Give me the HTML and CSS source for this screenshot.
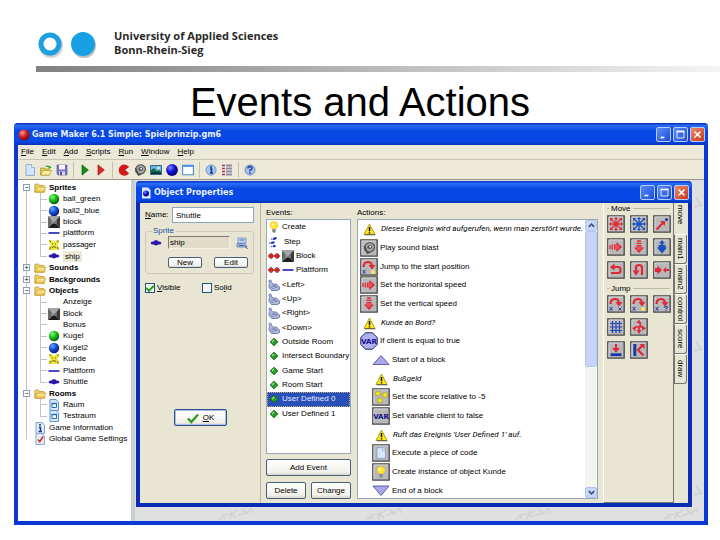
FILE: index.html
```html
<!DOCTYPE html>
<html lang="en">
<head>
<meta charset="utf-8">
<title>Events and Actions</title>
<link rel="stylesheet" href="styles.css">
</head>
<body>
<svg class="defs" aria-hidden="true">
  <defs>
    <radialGradient id="gGreen" cx=".35" cy=".3" r=".8"><stop offset="0" stop-color="#7dff6a"/><stop offset=".5" stop-color="#17b417"/><stop offset="1" stop-color="#064a06"/></radialGradient>
    <radialGradient id="gBlue" cx=".35" cy=".3" r=".8"><stop offset="0" stop-color="#6aa8ff"/><stop offset=".5" stop-color="#1646d0"/><stop offset="1" stop-color="#06114a"/></radialGradient>
    <radialGradient id="gDeep" cx=".35" cy=".3" r=".8"><stop offset="0" stop-color="#7a8cff"/><stop offset=".45" stop-color="#1414d8"/><stop offset="1" stop-color="#00005a"/></radialGradient>
    <radialGradient id="gRed" cx=".35" cy=".3" r=".8"><stop offset="0" stop-color="#ff9a8a"/><stop offset=".5" stop-color="#d01c1c"/><stop offset="1" stop-color="#5a0606"/></radialGradient>
    <linearGradient id="gFolder" x2="0" y2="1"><stop offset="0" stop-color="#fff6b0"/><stop offset="1" stop-color="#e8b93a"/></linearGradient>
  </defs>
  <symbol id="green" viewBox="0 0 12 12"><circle cx="6" cy="6" r="5.2" fill="url(#gGreen)"/></symbol>
  <symbol id="blue" viewBox="0 0 12 12"><circle cx="6" cy="6" r="5.2" fill="url(#gBlue)"/></symbol>
  <symbol id="deep" viewBox="0 0 12 12"><circle cx="6" cy="6" r="5.9" fill="url(#gDeep)"/></symbol>
  <symbol id="block" viewBox="0 0 12 12"><path d="M0 0H12L6 6Z" fill="#a4a4a4"/><path d="M0 0V12L6 6Z" fill="#6a6a6a"/><path d="M12 0V12L6 6Z" fill="#3a3a3a"/><path d="M0 12H12L6 6Z" fill="#1c1c1c"/><path d="M3 3H9V8H3Z" fill="#b0b0b0" opacity=".45"/></symbol>
  <symbol id="plat" viewBox="0 0 12 12"><path d="M.5 6H11.5" stroke="#1c1cb0" stroke-width="1.6"/></symbol>
  <symbol id="ship" viewBox="0 0 12 12"><path d="M.5 6Q1 4.3 3.5 4.5L5 3.2H7L8.500 4.500Q11 4.300 11.500 6Q11 7.800 8.500 7.600L6 8.600L3.500 7.600Q1 7.800 .5 6Z" fill="#2a16a8"/></symbol>
  <symbol id="pass" viewBox="0 0 12 12"><path d="M1 1H4L5 3H7L8 1H11V4L9 6L11 8V11H1V8L3 6L1 4Z" fill="#ece438"/><path d="M1.500 1.500L3 3M10.500 1.500L9 3M1.500 10.500L3 8M10.500 10.500L9 8M4 5H5M7 5H8M4 8.500Q6 6.500 8 8.500" stroke="#6a6410" stroke-width="1" fill="none"/></symbol>
  <symbol id="folder" viewBox="0 0 12 12"><path d="M.8 10V3Q.8 2 1.800 2H4.500L5.500 3.500H9.500Q10.300 3.500 10.300 4.500V10Z" fill="#f2d268" stroke="#b89028" stroke-width=".7"/><path d="M1 10.300L2.800 5.200H11.600L10.300 10.300Z" fill="url(#gFolder)" stroke="#c09a30" stroke-width=".7"/></symbol>
  <symbol id="room" viewBox="0 0 12 12"><path d="M2 .6H8L10.500 3V11.400H2Z" fill="#dcecff" stroke="#5b8ccc"/><path d="M4 4.500H8.500V8.500H4Z" fill="#fff" stroke="#2468b8"/><path d="M3.500 4.500H9" stroke="#2468b8" stroke-width="1.500"/></symbol>
  <symbol id="info" viewBox="0 0 12 12"><path d="M2 .6H8L10.500 3V11.400H2Z" fill="#e4eefc" stroke="#7c9cc8"/><path d="M6 2V4M4.800 5.500H6.500V9.500M4.500 9.500H8" stroke="#123a8c" stroke-width="1.500" fill="none"/></symbol>
  <symbol id="settings" viewBox="0 0 12 12"><path d="M2 .6H8L10.500 3V11.400H2Z" fill="#e8eefa" stroke="#8ca0c8"/><path d="M4 6.500L5.800 8.700L9 3.500" stroke="#d02828" stroke-width="1.500" fill="none"/></symbol>
  <symbol id="doc" viewBox="0 0 12 12"><path d="M2 .6H7.500L10.500 3.500V11.400H2Z" fill="#d6e6fb" stroke="#7d9ccc" stroke-width=".8"/><path d="M7.500 .6V3.500H10.500" fill="#fff" stroke="#7d9ccc" stroke-width=".7"/></symbol>
  <symbol id="open" viewBox="0 0 12 12"><path d="M.6 11V4H4L5 5H9V11Z" fill="#e8cc58" stroke="#a88820" stroke-width=".7"/><path d="M.8 11L3 6.500H11.500L9.500 11Z" fill="#fff0a0" stroke="#b89028" stroke-width=".7"/><path d="M5 3Q7 .5 9.500 2.500V1.200L11.500 4L8.200 4.800L9 3.800Q7 2 5 3Z" fill="#28a028"/></symbol>
  <symbol id="save" viewBox="0 0 12 12"><path d="M1 1H11V11H2L1 10Z" fill="#7a72c4" stroke="#5048a0" stroke-width=".6"/><path d="M3 1H9V5.500H3Z" fill="#f2f2fc"/><path d="M3 7.500H9V11H3Z" fill="#d8d8ee"/><path d="M4 8H6V11H4Z" fill="#5048a0"/></symbol>
  <symbol id="run" viewBox="0 0 12 12"><path d="M3 .8V11.200L9.300 6Z" fill="#189018" stroke="#0a5c0a" stroke-width=".7"/></symbol>
  <symbol id="debug" viewBox="0 0 12 12"><path d="M3 .8V11.200L9.300 6Z" fill="#e02828" stroke="#a01414" stroke-width=".7"/></symbol>
  <symbol id="pac" viewBox="0 0 12 12"><path d="M10.800 2.800A5.600 5.600 0 1 0 10.800 9.500L6.500 6Z" fill="#d81818"/><path d="M10.800 2.800L6.500 6L10.800 9.500" stroke="#701010" stroke-width=".7" fill="none"/></symbol>
  <symbol id="speaker" viewBox="0 0 12 12"><ellipse cx="6.500" cy="5.500" rx="5" ry="4.500" transform="rotate(-35 6.500 5.500)" fill="#aaa" stroke="#555" stroke-width="1.300"/><ellipse cx="6.700" cy="5" rx="2.500" ry="2" fill="#555"/><circle cx="7.200" cy="4.700" r="1" fill="#e8e8e8"/><path d="M1.500 4L4.500 11L7 10" stroke="#4a4a4a" stroke-width="1.500" fill="none"/></symbol>
  <symbol id="image" viewBox="0 0 12 12"><path d="M.5 1.500H11.500V10.500H.5Z" fill="#68b8f0" stroke="#1a4a78" stroke-width=".8"/><path d="M1 6L4 4L7 7L9 6L11 7.500V10H1Z" fill="#0f6a48"/><path d="M1 9L6 8L11 9V10H1Z" fill="#0a3034"/><circle cx="8.500" cy="4" r="1.200" fill="#fff8c0"/></symbol>
  <symbol id="window" viewBox="0 0 12 12"><path d="M.6 1.200H11.400V10.800H.6Z" fill="#fbfdff" stroke="#4a8cc8" stroke-width="1.100"/><path d="M1 2H11" stroke="#4a94e0" stroke-width="1.800"/></symbol>
  <symbol id="tinfo" viewBox="0 0 12 12"><circle cx="6" cy="6" r="5" fill="#a8c8f0" stroke="#6c94cc"/><path d="M6 2.200V4M5 5H6.500V9M5 9H8" stroke="#1038a0" stroke-width="1.700" fill="none"/></symbol>
  <symbol id="thelp" viewBox="0 0 12 12"><circle cx="6" cy="6" r="5" fill="#a8c4ec" stroke="#6c8cc8"/><path d="M3.800 4.500Q4 2.500 6 2.500Q8.200 2.600 8 4.400Q7.700 5.300 6 6.300V7.300M6 8.300V9.800" stroke="#1c3c9c" stroke-width="1.500" fill="none"/></symbol>
  <symbol id="list" viewBox="0 0 12 12"><path d="M1 1.500H4M1 4.500H4M1 7.500H4M1 10.500H4" stroke="#a03858" stroke-width="1.500"/><path d="M5 1.500H11M5 4.500H11M5 7.500H11M5 10.500H11" stroke="#8c8ca8" stroke-width="1.800"/></symbol>
  <symbol id="bulb" viewBox="0 0 12 12"><path d="M6 .5Q10 .5 10 4.300Q10 6 7.800 8H4.200Q2 6 2 4.300Q2 .5 6 .5Z" fill="#ffe62c" stroke="#e0b820" stroke-width=".5"/><path d="M4.300 8H7.700V11L6 12L4.300 11Z" fill="#8a8a98"/><circle cx="4.800" cy="3.500" r="1.200" fill="#fffbd0"/></symbol>
  <symbol id="step" viewBox="0 0 12 12"><path d="M5 2Q8 0 9 2Q8 4.500 5 4ZM3 6Q6 4.500 7 6.500Q5.500 8.500 3 7.800ZM5 9.500Q7 8 8 10Q7 12 5 11Z" fill="#2a3cc8"/><path d="M3.500 3.500L4.300 2.500M1.500 7.500L2.300 6.500M3.500 11L4.200 10" stroke="#2a3cc8" stroke-width="1.300"/></symbol>
  <symbol id="collide" viewBox="0 0 12 12"><path d="M0 6L2.500 3.200V5H3.500V3.200L6 6L3.500 8.800V7H2.500V8.800ZM6 6L8.500 3.200V5H9.500V3.200L12 6L9.500 8.800V7H8.500V8.800Z" fill="#e02020" stroke="#801010" stroke-width=".5"/></symbol>
  <symbol id="key" viewBox="0 0 12 12"><path d="M1 1.500Q3 0 3.500 2.500Q3.500 4.500 5 5H8.500L11.500 8V10.500L9 11.500H3.500L1 8.500V6Q2.500 4 1 3Z" fill="#b4bcdc" stroke="#5c68a0" stroke-width=".8"/><path d="M3.500 6.500L9 9M5 6L9.500 8M2.500 8L6 10" stroke="#5c68a0" stroke-width=".7"/></symbol>
  <symbol id="diamond" viewBox="0 0 12 12"><path d="M6 2.200L9.800 6L6 9.800L2.200 6Z" fill="#2c9c2c" stroke="#145c14" stroke-width=".9"/><path d="M4 6L6 4" stroke="#8ce87c" stroke-width="1.200"/></symbol>
  <symbol id="find" viewBox="0 0 12 12"><path d="M2 1H10V6H2Z" fill="#c8dcf8" stroke="#6c88c0" stroke-width=".8"/><path d="M1 6.500H9L11 10H1Z" fill="#a0b8e4" stroke="#6078b0" stroke-width=".8"/><path d="M3.500 3H8.500M3 8.500H8M9 9L11.500 12" stroke="#44609c"/></symbol>
  <symbol id="check" viewBox="0 0 12 12"><path d="M1 6.500L4.300 10L11 2.500" stroke="#2c9c1c" stroke-width="2.300" fill="none"/></symbol>
  <symbol id="warn" viewBox="0 0 18 18"><path d="M9.500 4L15 14.500H4Z" fill="#ffe818" stroke="#a89018" stroke-width=".9" stroke-linejoin="round"/><path d="M15.300 14.800H5" stroke="#444" stroke-width=".8"/><path d="M9.500 7V11.200M9.500 12.200V13.600" stroke="#111" stroke-width="1.500"/></symbol>
  <symbol id="up" viewBox="0 0 18 18"><path d="M9 4.500L17 13.500H1Z" fill="#aaa8ec" stroke="#44448c" stroke-width=".8"/></symbol>
  <symbol id="down" viewBox="0 0 18 18"><path d="M9 13.500L17 4H1Z" fill="#aaa8ec" stroke="#44448c" stroke-width=".8"/></symbol>
  <symbol id="oct" viewBox="0 0 18 18"><path d="M5.500 .8H12.500L17.200 5.500V12.500L12.500 17.200H5.500L.8 12.500V5.500Z" fill="#b0b0f4" stroke="#20205c"/></symbol>
  <symbol id="tile" viewBox="0 0 18 18"><path d="M.8 .8H17.200V17.200H.8Z" fill="#b8b8b8" stroke="#484848" stroke-width="1.300"/><path d="M1.900 16V1.900H16" stroke="#e0e0e0" stroke-width=".8" fill="none"/></symbol>
  <symbol id="star" viewBox="0 0 18 18"><path d="M9 3V15M3 9H15M4 4L14 14M14 4L4 14" stroke="currentColor" stroke-width="1.300"/><path d="M7 4L9 2L11 4ZM7 14L9 16L11 14ZM4 7L2 9L4 11ZM14 7L16 9L14 11ZM3 6V3H6ZM12 3H15V6ZM3 12V15H6ZM15 12V15H12Z" fill="currentColor"/></symbol>
  <symbol id="target" viewBox="0 0 18 18"><path d="M3.500 14.500L10 8" stroke="#e02838" stroke-width="2.200"/><path d="M7 6H12V11Z" fill="#e02838"/><circle cx="13.500" cy="4.500" r="1.500" fill="#1838a0"/></symbol>
  <symbol id="right" viewBox="0 0 18 18"><path d="M3 7V11M5.300 6.500V11.500" stroke="#e02838" stroke-width="1.300"/><path d="M7 6.500H9.500V4L15 9L9.500 14V11.500H7Z" fill="#e02838"/><path d="M8 8H12M8 10H12" stroke="#f0a0a0" stroke-width=".7"/></symbol>
  <symbol id="arrdown" viewBox="0 0 18 18"><path d="M7 3H11M6.500 5.300H11.500" stroke="#e02838" stroke-width="1.300"/><path d="M6.500 7H11.500V9.500H14L9 15L4 9.500H6.500Z" fill="#e02838"/><path d="M8 8V12M10 8V12" stroke="#f0a0a0" stroke-width=".7"/></symbol>
  <symbol id="updown" viewBox="0 0 18 18"><path d="M9 2L12 5.500H10V7H12.500V9.500H14L9 15.500L4 9.500H5.500V7H8V5.500H6Z" fill="#1850c0"/></symbol>
  <symbol id="revh" viewBox="0 0 18 18"><path d="M6 6H11.500Q13.500 6 13.500 9Q13.500 12 11.500 12H4" stroke="#e02838" stroke-width="2.200" fill="none"/><path d="M3 6.300L7.500 2.500V9.500Z" fill="#e02838"/></symbol>
  <symbol id="revv" viewBox="0 0 18 18"><path d="M6 11V7Q6 4 9 4Q12 4 12 7V14" stroke="#e02838" stroke-width="2.200" fill="none"/><path d="M2.500 9.500H9.500L6 14.500Z" fill="#e02838"/></symbol>
  <symbol id="friction" viewBox="0 0 18 18"><path d="M2 7H4.500V4.500L9 9L4.500 13.500V11H2ZM10 9L13 6V8H16V10H13V12Z" fill="#e02838"/></symbol>
  <symbol id="hop" viewBox="0 0 18 18"><path d="M3.500 9Q3.500 4 8 4Q11.500 4 12 8" stroke="#e02838" stroke-width="2.200" fill="none"/><path d="M8.500 7H15.500L12 11.500Z" fill="#e02838"/><path d="M2.500 12L5.500 15.500M5.500 12L2.500 15.500" stroke="#3048a8" stroke-width="1.100"/></symbol>
  <symbol id="grid" viewBox="0 0 18 18"><path d="M3 5.500H15M3 9H15M3 12.500H15M5.500 3V15M9 3V15M12.500 3V15" stroke="#2848b8" stroke-width="1.200"/></symbol>
  <symbol id="wrap" viewBox="0 0 18 18"><path d="M9 4Q12 6 9 9V14M4 11Q5 8 9 9Q12 8 13 10" stroke="#e02838" stroke-width="1.600" fill="none"/><path d="M6.500 5L9 1.500L11 5.500ZM12 7.500L16 10.500L12 12.500ZM6 8.500L2 10L5 13ZM6.500 12H11.500L9 16Z" fill="#e02838"/></symbol>
  <symbol id="contact" viewBox="0 0 18 18"><path d="M8 3H10V7H13L9 11.500L5 7H8Z" fill="#e02838"/><path d="M3.500 13.700H14.500" stroke="#1838a8" stroke-width="2.800"/></symbol>
  <symbol id="bounce" viewBox="0 0 18 18"><path d="M4.800 3V15" stroke="#1838a8" stroke-width="3"/><path d="M13.500 14.500L8 9L12 5" stroke="#e02838" stroke-width="2.200" fill="none"/><path d="M9.500 3H14.500V8Z" fill="#e02838"/></symbol>
  <symbol id="score" viewBox="0 0 18 18"><g fill="#f4e820" stroke="#98901c" stroke-width=".6"><circle cx="6" cy="5.500" r="2.400"/><circle cx="13" cy="7" r="2.400"/><circle cx="8" cy="12.500" r="2.400"/></g></symbol>
  <symbol id="mark" viewBox="0 0 44 16"><path d="M1 15L7 10M8 14L6 9L13 8M14 14L16 4M15 9L24 3M16 9L21 12M23 10L32 6L27 3M31 9L38 2L41 7" stroke="#d3d3d3" stroke-width="2" fill="none"/></symbol>
  <symbol id="edge" viewBox="0 0 10 12"><path d="M1 11L8 9L3 2" stroke="#d3d3d3" stroke-width="2" fill="none"/></symbol>
</svg>

<header class="brand">
  <svg class="logo" viewBox="0 0 64 30" aria-hidden="true">
    <g opacity=".25"><circle cx="15" cy="16" r="9" fill="none" stroke="#555" stroke-width="6"/><circle cx="48" cy="16" r="12"/></g>
    <circle cx="14" cy="14" r="9" fill="#fff" stroke="#1f9fe0" stroke-width="5"/><circle cx="47" cy="14" r="12" fill="#18a0e4"/>
  </svg>
  <p>University of Applied Sciences<br>Bonn-Rhein-Sieg</p>
</header>
<div class="rule"></div>
<h1>Events and Actions</h1>

<main class="app">
  <div class="titlebar">
    <svg class="i12" viewBox="0 0 12 12" aria-hidden="true"><circle cx="6" cy="6" r="5.500" fill="url(#gRed)"/></svg>
    <h2>Game Maker 6.1 Simple: Spielprinzip.gm6</h2>
    <div class="winbtns">
      <button aria-label="Minimize"><svg viewBox="0 0 15 15"><path d="M4 11H8.500" stroke="#fff" stroke-width="2"/></svg></button>
      <button aria-label="Maximize"><svg viewBox="0 0 15 15"><path d="M3.500 4H11.500V11.500H3.500Z" fill="none" stroke="#fff"/><path d="M3 4H12" stroke="#fff" stroke-width="2"/></svg></button>
      <button class="close" aria-label="Close"><svg viewBox="0 0 15 15"><path d="M4 4L11 11M11 4L4 11" stroke="#fff" stroke-width="1.800"/></svg></button>
    </div>
  </div>
  <nav class="menu">
    <a href="#"><u>F</u>ile</a><a href="#"><u>E</u>dit</a><a href="#"><u>A</u>dd</a><a href="#"><u>S</u>cripts</a><a href="#"><u>R</u>un</a><a href="#"><u>W</u>indow</a><a href="#"><u>H</u>elp</a>
  </nav>
  <div class="toolbar">
    <button aria-label="New"><svg><use href="#doc"/></svg></button>
    <button aria-label="Open"><svg><use href="#open"/></svg></button>
    <button aria-label="Save"><svg><use href="#save"/></svg></button>
    <i></i>
    <button aria-label="Run"><svg><use href="#run"/></svg></button>
    <button aria-label="Debug"><svg><use href="#debug"/></svg></button>
    <i></i>
    <button aria-label="Add sprite"><svg><use href="#pac"/></svg></button>
    <button aria-label="Add sound"><svg><use href="#speaker"/></svg></button>
    <button aria-label="Add background"><svg><use href="#image"/></svg></button>
    <button aria-label="Add object"><svg><use href="#deep"/></svg></button>
    <button aria-label="Add room"><svg><use href="#window"/></svg></button>
    <i></i>
    <button aria-label="Game information"><svg><use href="#tinfo"/></svg></button>
    <button aria-label="Game settings"><svg><use href="#list"/></svg></button>
    <i></i>
    <button aria-label="Help"><svg><use href="#thelp"/></svg></button>
  </div>

  <div class="client">
    <ul class="tree">
      <li class="root first"><span class="tg">−</span><svg><use href="#folder"/></svg><b>Sprites</b></li>
      <li class="child"><svg><use href="#green"/></svg><span>ball_green</span></li>
      <li class="child"><svg><use href="#blue"/></svg><span>ball2_blue</span></li>
      <li class="child"><svg><use href="#block"/></svg><span>block</span></li>
      <li class="child"><svg><use href="#plat"/></svg><span>plattform</span></li>
      <li class="child"><svg><use href="#pass"/></svg><span>passager</span></li>
      <li class="child end"><svg><use href="#ship"/></svg><span class="sel">ship</span></li>
      <li class="root"><span class="tg">+</span><svg><use href="#folder"/></svg><b>Sounds</b></li>
      <li class="root"><span class="tg">+</span><svg><use href="#folder"/></svg><b>Backgrounds</b></li>
      <li class="root"><span class="tg">−</span><svg><use href="#folder"/></svg><b>Objects</b></li>
      <li class="child"><svg></svg><span>Anzeige</span></li>
      <li class="child"><svg><use href="#block"/></svg><span>Block</span></li>
      <li class="child"><svg></svg><span>Bonus</span></li>
      <li class="child"><svg><use href="#green"/></svg><span>Kugel</span></li>
      <li class="child"><svg><use href="#blue"/></svg><span>Kugel2</span></li>
      <li class="child"><svg><use href="#pass"/></svg><span>Kunde</span></li>
      <li class="child"><svg><use href="#plat"/></svg><span>Plattform</span></li>
      <li class="child end"><svg><use href="#ship"/></svg><span>Shuttle</span></li>
      <li class="root"><span class="tg">−</span><svg><use href="#folder"/></svg><b>Rooms</b></li>
      <li class="child"><svg><use href="#room"/></svg><span>Raum</span></li>
      <li class="child end"><svg><use href="#room"/></svg><span>Testraum</span></li>
      <li class="root leaf"><svg><use href="#info"/></svg><span>Game Information</span></li>
      <li class="root leaf last"><svg><use href="#settings"/></svg><span>Global Game Settings</span></li>
    </ul>

    <div class="desktop">
      <div class="marks" aria-hidden="true"><svg><use href="#mark"/></svg><svg><use href="#mark"/></svg><svg><use href="#mark"/></svg><svg><use href="#mark"/></svg></div>
      <div class="edges" aria-hidden="true"><svg><use href="#edge"/></svg><svg><use href="#edge"/></svg><svg><use href="#edge"/></svg></div>
      <section class="dialog">
        <div class="titlebar">
          <svg class="i12" viewBox="0 0 12 12" aria-hidden="true"><path d="M2 .5H8L10.500 3V11.500H2Z" fill="#dfe8fb"/><circle cx="6" cy="6.500" r="3" fill="url(#gDeep)"/></svg>
          <h2>Object Properties</h2>
          <div class="winbtns">
            <button aria-label="Minimize"><svg viewBox="0 0 15 15"><path d="M4 11H8.500" stroke="#fff" stroke-width="2"/></svg></button>
            <button aria-label="Maximize"><svg viewBox="0 0 15 15"><path d="M3.500 4H11.500V11.500H3.500Z" fill="none" stroke="#fff"/><path d="M3 4H12" stroke="#fff" stroke-width="2"/></svg></button>
            <button class="close" aria-label="Close"><svg viewBox="0 0 15 15"><path d="M4 4L11 11M11 4L4 11" stroke="#fff" stroke-width="1.800"/></svg></button>
          </div>
        </div>
        <div class="panes">
          <form class="props">
            <div class="name"><label for="name"><u>N</u>ame:</label><input id="name" type="text" value="Shuttle"></div>
            <fieldset>
              <legend>Sprite</legend>
              <div class="pick"><svg><use href="#ship"/></svg><input type="text" value="ship" aria-label="Sprite" readonly><svg><use href="#find"/></svg></div>
              <div class="pair"><button type="button" class="btn">New</button><button type="button" class="btn">Edit</button></div>
            </fieldset>
            <div class="flags">
              <label><input type="checkbox" checked><span><u>V</u>isible</span></label>
              <label><input type="checkbox"><span>So<u>l</u>id</span></label>
            </div>
            <button type="button" class="btn ok"><svg><use href="#check"/></svg><span><u>O</u>K</span></button>
          </form>

          <div class="events">
            <h3>Events:</h3>
            <div class="box">
              <ul>
                <li><svg><use href="#bulb"/></svg>Create</li>
                <li class="wide"><svg><use href="#step"/></svg>Step</li>
                <li><svg><use href="#collide"/></svg><svg><use href="#block"/></svg>Block</li>
                <li><svg><use href="#collide"/></svg><svg><use href="#plat"/></svg>Plattform</li>
                <li><svg><use href="#key"/></svg>&lt;Left&gt;</li>
                <li><svg><use href="#key"/></svg>&lt;Up&gt;</li>
                <li><svg><use href="#key"/></svg>&lt;Right&gt;</li>
                <li><svg><use href="#key"/></svg>&lt;Down&gt;</li>
                <li><svg><use href="#diamond"/></svg>Outside Room</li>
                <li><svg><use href="#diamond"/></svg>Intersect Boundary</li>
                <li><svg><use href="#diamond"/></svg>Game Start</li>
                <li><svg><use href="#diamond"/></svg>Room Start</li>
                <li class="on"><svg><use href="#diamond"/></svg>User Defined 0</li>
                <li><svg><use href="#diamond"/></svg>User Defined 1</li>
              </ul>
            </div>
            <button class="btn">Add Event</button>
            <div class="pair"><button class="btn">Delete</button><button class="btn">Change</button></div>
          </div>

          <div class="actions">
            <h3>Actions:</h3>
            <div class="box">
              <ul>
                <li class="note"><svg><use href="#warn"/></svg>Dieses Ereignis wird aufgerufen, wenn man zerstört wurde.</li>
                <li><svg viewBox="0 0 18 18"><use href="#tile"/><use href="#speaker" x="3" y="3" width="12" height="12"/></svg>Play sound blast</li>
                <li><svg viewBox="0 0 18 18"><use href="#tile"/><use href="#hop"/><circle cx="13" cy="14" r="2" fill="#ffe860"/></svg>Jump to the start position</li>
                <li><svg viewBox="0 0 18 18"><use href="#tile"/><use href="#right"/></svg>Set the horizontal speed</li>
                <li><svg viewBox="0 0 18 18"><use href="#tile"/><use href="#arrdown"/></svg>Set the vertical speed</li>
                <li class="note"><svg><use href="#warn"/></svg>Kunde an Bord?</li>
                <li><svg viewBox="0 0 18 18"><use href="#oct"/><text class="var" x="9" y="12">VAR</text></svg>If client is equal to true</li>
                <li class="in"><svg><use href="#up"/></svg>Start of a block</li>
                <li class="in note"><svg><use href="#warn"/></svg>Bußgeld</li>
                <li class="in"><svg viewBox="0 0 18 18"><use href="#tile"/><use href="#score"/></svg>Set the score relative to -5</li>
                <li class="in"><svg viewBox="0 0 18 18"><use href="#tile"/><text class="var" x="9" y="12">VAR</text></svg>Set variable client to false</li>
                <li class="in note"><svg><use href="#warn"/></svg>Ruft das Ereignis 'User Defined 1' auf.</li>
                <li class="in"><svg viewBox="0 0 18 18"><use href="#tile"/><use href="#doc" x="3" y="3" width="12" height="12"/></svg>Execute a piece of code</li>
                <li class="in"><svg viewBox="0 0 18 18"><use href="#tile"/><use href="#bulb" x="3" y="3" width="12" height="12"/></svg>Create instance of object Kunde</li>
                <li class="in"><svg><use href="#down"/></svg>End of a block</li>
              </ul>
              <div class="scroll">
                <button aria-label="Scroll up"><svg viewBox="0 0 10 10"><path d="M2 6.500L5 3.500L8 6.500" stroke="#38506c" stroke-width="1.700" fill="none"/></svg></button>
                <div class="thumb"></div>
                <button aria-label="Scroll down"><svg viewBox="0 0 10 10"><path d="M2 3.500L5 6.500L8 3.500" stroke="#38506c" stroke-width="1.700" fill="none"/></svg></button>
              </div>
            </div>
          </div>

          <div class="palette">
            <h4><span>Move</span></h4>
            <div class="tiles">
              <button aria-label="Move fixed"><svg class="red" viewBox="0 0 18 18"><use href="#tile"/><use href="#star"/></svg></button>
              <button aria-label="Move free"><svg class="blu" viewBox="0 0 18 18"><use href="#tile"/><use href="#star"/></svg></button>
              <button aria-label="Move towards"><svg viewBox="0 0 18 18"><use href="#tile"/><use href="#target"/></svg></button>
              <button aria-label="Speed horizontal"><svg viewBox="0 0 18 18"><use href="#tile"/><use href="#right"/></svg></button>
              <button aria-label="Speed vertical"><svg viewBox="0 0 18 18"><use href="#tile"/><use href="#arrdown"/></svg></button>
              <button aria-label="Set gravity"><svg viewBox="0 0 18 18"><use href="#tile"/><use href="#updown"/></svg></button>
              <button aria-label="Reverse horizontal"><svg viewBox="0 0 18 18"><use href="#tile"/><use href="#revh"/></svg></button>
              <button aria-label="Reverse vertical"><svg viewBox="0 0 18 18"><use href="#tile"/><use href="#revv"/></svg></button>
              <button aria-label="Set friction"><svg viewBox="0 0 18 18"><use href="#tile"/><use href="#friction"/></svg></button>
            </div>
            <h4><span>Jump</span></h4>
            <div class="tiles">
              <button aria-label="Jump to position"><svg viewBox="0 0 18 18"><use href="#tile"/><use href="#hop"/><path d="M11.500 12.500L14.500 15.500M14.500 12.500L11.500 15.500" stroke="#3048a8"/></svg></button>
              <button aria-label="Jump to start"><svg viewBox="0 0 18 18"><use href="#tile"/><use href="#hop"/><circle cx="13" cy="14" r="2" fill="#ffe860"/></svg></button>
              <button aria-label="Jump to random"><svg viewBox="0 0 18 18"><use href="#tile"/><use href="#hop"/><path d="M11 12.500Q13 10.500 14.500 12Q14.500 13 13 13.700V14.300M13 15V16.300" stroke="#3048a8" stroke-width="1.200" fill="none"/></svg></button>
              <button aria-label="Align to grid"><svg viewBox="0 0 18 18"><use href="#tile"/><use href="#grid"/></svg></button>
              <button aria-label="Wrap screen"><svg viewBox="0 0 18 18"><use href="#tile"/><use href="#wrap"/></svg></button>
              <button class="col1" aria-label="Move to contact"><svg viewBox="0 0 18 18"><use href="#tile"/><use href="#contact"/></svg></button>
              <button aria-label="Bounce"><svg viewBox="0 0 18 18"><use href="#tile"/><use href="#bounce"/></svg></button>
            </div>
          </div>
          <div class="tabs">
            <button class="cur">move</button><button>main1</button><button>main2</button><button>control</button><button>score</button><button>draw</button>
          </div>
        </div>
      </section>
    </div>
  </div>
</main>
</body>
</html>
```
FILE: styles.css
```css
* { box-sizing: border-box; }

body {
  margin: 0;
  background: #fff;
  color: #000;
  font: 8px/12px "Liberation Sans", sans-serif;
}

h1, h2, h3, h4, p, ul { margin: 0; padding: 0; }
ul { list-style: none; }
svg { display: block; flex: none; }
button { font: inherit; color: inherit; padding: 0; border: 0; background: none; }
input { font: inherit; color: inherit; }
.defs { width: 0; height: 0; position: absolute; }
.i12 { width: 12px; height: 12px; }

/* Slide header */
.brand { display: flex; gap: 14px; padding: 29px 36px 0; height: 66px; }
.logo { width: 64px; height: 30px; margin-top: 1px; }
.brand p { font: bold 11px/14px "Open Sans", "Noto Sans", sans-serif; color: #2a2a2a; }
.rule { height: 6px; margin-left: 36px; background: linear-gradient(90deg, #808080, #f4f4f4); }
h1 { margin-top: 9px; font: 40px/42px "Liberation Sans", sans-serif; color: #000; text-align: center; }

/* Windows */
.app {
  margin: 0 12px 15px 14px;
  padding: 0 4px 4px;
  background: #0a38d4;
  border-radius: 4px 4px 0 0;
}
.titlebar {
  display: flex;
  align-items: center;
  gap: 2px;
  height: 22px;
  margin: 0 -4px;
  padding: 1px 3px 0 4px;
  border-radius: 4px 4px 0 0;
  background: linear-gradient(#0a2cb8, #2a6cf8 12%, #0848e0 35%, #0848ec 80%, #0634b8);
  color: #e8f0ff;
}
.titlebar h2 { flex: 1; font: bold 8px/12px "DejaVu Sans", sans-serif; }
.winbtns { display: flex; gap: 2px; }
.winbtns button {
  width: 15px;
  height: 15px;
  border: 1px solid #b8ccfa;
  border-radius: 2px;
  background: linear-gradient(135deg, #5c8cf8, #1c4cd8);
}
.winbtns .close { background: linear-gradient(135deg, #f08868, #c83818); }
.winbtns svg { width: 13px; height: 13px; }

.menu { display: flex; gap: 8px; height: 15px; padding: 1px 3px; background: #ece9d8; border-bottom: 1px solid #c8c4b4; }
.menu a { color: inherit; text-decoration: none; }
.toolbar { display: flex; align-items: center; height: 20px; padding: 0 4px; background: #ece9d8; border-bottom: 1px solid #98968c; }
.toolbar button { display: grid; place-items: center; width: 16px; height: 16px; }
.toolbar svg { width: 12px; height: 12px; }
.toolbar i { width: 1px; height: 16px; margin: 0 3px; background: #c4c0b0; }

.client { display: flex; background: #e0e0e0; }

/* Resource tree */
.tree {
  display: grid;
  grid-auto-rows: 1fr;
  height: 341px;
  width: 117px;
  padding: 2px 0 76px 5px;
  background: #fff;
  border-right: 4px solid #c8d0d4;
}
.tree li {
  display: flex;
  align-items: center;
  min-height: 0;
  white-space: nowrap;
  background: linear-gradient(#c4c4c4, #c4c4c4) 3px 0 / 1px 100% no-repeat;
}
.tree li.first { background-position: 3px 100%; background-size: 1px 50%; }
.tree li.last { background-size: 1px 50%; }
.tree svg { width: 12px; height: 12px; margin-right: 3px; }
.tree .tg {
  width: 7px;
  height: 7px;
  margin-right: 4px;
  border: 1px solid #8ca0b8;
  background: #fff;
  font: 7px/5px "Liberation Sans", sans-serif;
  text-align: center;
}
.tree .leaf { padding-left: 11px; }
.tree .child {
  padding-left: 25px;
  background:
    linear-gradient(#c4c4c4, #c4c4c4) 3px 0 / 1px 100% no-repeat,
    linear-gradient(#c4c4c4, #c4c4c4) 17px 0 / 1px 100% no-repeat,
    linear-gradient(#c4c4c4, #c4c4c4) 17px 50% / 7px 1px no-repeat;
}
.tree .child.end { background-size: 1px 100%, 1px 50%, 7px 1px; }
.tree .sel { background: #ece9d8; padding: 0 2px; line-height: 11px; }
.tree b { font: bold 8px/11px "Liberation Sans", sans-serif; }

/* Object dialog */
.desktop { position: relative; flex: 1; display: flex; padding: 1px 12px 14px 1px; min-width: 0; }
.marks { position: absolute; left: 80px; right: 0; bottom: 0; display: flex; justify-content: space-between; }
.marks svg { width: 44px; height: 14px; }
.edges { position: absolute; right: 1px; top: 16px; display: flex; flex-direction: column; gap: 132px; }
.edges svg { width: 10px; height: 12px; }
.dialog { position: relative; flex: 1; min-width: 0; display: flex; flex-direction: column; padding: 0 4px 4px; background: #0a2cb4; border-radius: 4px 4px 0 0; }
.panes { flex: 1; display: flex; background: #e8e5d3; }

.btn {
  display: flex;
  align-items: center;
  justify-content: center;
  height: 17px;
  border: 1px solid #48607c;
  border-radius: 2px;
  background: linear-gradient(#fff, #f2f1ea 80%, #d8d4c8);
}
.pair { display: flex; justify-content: space-between; }

.props { display: flex; flex-direction: column; width: 121px; padding: 4px 6px 0 5px; border-right: 1px solid #b8b4a8; }
.name { display: flex; align-items: center; justify-content: space-between; }
.name input { width: 82px; height: 16px; padding: 0 3px; border: 1px solid #8ca4bc; background: #fff; }
.props fieldset { margin: 3px 0 0; padding: 0 5px 5px 4px; border: 1px solid #d0ccbc; border-radius: 3px; min-width: 0; }
.props legend { margin-left: 2px; padding: 0 1px; line-height: 10px; color: #1c4ca8; }
.pick { display: flex; align-items: center; gap: 6px; }
.pick svg { width: 12px; height: 12px; }
.pick input { flex: 1; min-width: 0; height: 13px; padding: 0 1px; border: 1px solid #f4f2e8; border-top-color: #807c70; border-left-color: #807c70; background: #e0dcc8; }
.props .pair { margin: 8px 0 0 18px; }
.props .pair .btn { width: 34px; height: 11px; }
.flags { display: flex; margin-top: 8px; }
.flags label { display: flex; flex: none; align-items: center; gap: 2px; width: 57px; }
.flags label + label { width: auto; }
.flags input {
  appearance: none;
  display: grid;
  place-items: center;
  width: 10px;
  height: 10px;
  margin: 0;
  border: 1px solid #24507c;
  background: #f6f6f2;
}
.flags input:checked::before {
  content: "";
  width: 6px;
  height: 3px;
  margin-bottom: 2px;
  border: solid #21a121;
  border-width: 0 0 2px 2px;
  transform: rotate(-45deg);
}
.ok { width: 53px; gap: 4px; margin: 115px 0 0 29px; border-color: #2c5088; box-shadow: inset 0 0 0 1px #a8c0e8; }
.ok svg { width: 12px; height: 12px; }

.box { display: flex; background: #fff; border: 1px solid #98a8b4; overflow: hidden; }
h3 { font: inherit; margin: 4px 0 0; }
.box li { display: flex; align-items: center; min-height: 0; white-space: nowrap; }
.box ul { display: grid; grid-auto-rows: 1fr; flex: 1; min-width: 0; }

.events { width: 90px; padding-left: 5px; }
.events .box { height: 235px; }
.events ul { height: 201px; }
.events li { gap: 2px; padding-left: 1px; }
.events li.wide { gap: 4px; }
.events li svg { width: 12px; height: 12px; }
.events .on { background: #2850b8; color: #e4ecff; outline: 1px dotted #c8b070; outline-offset: -1px; }
.events > .btn { width: 100%; margin: 5px 0 6px; }
.events .pair .btn { width: 40px; }

.actions { flex: 1; min-width: 0; padding-left: 6px; }
.actions .box { height: 280px; }
.actions ul { height: 280px; padding-left: 2px; }
.actions li { gap: 2px; }
.actions li svg { width: 18px; height: 18px; }
.actions .in { padding-left: 12px; }
.actions .note { font-family: Roboto, "Liberation Sans", sans-serif; font-style: italic; gap: 3px; }
.var { font: bold 7px "DejaVu Sans", sans-serif; text-anchor: middle; fill: #10108c; }
.scroll { display: flex; flex-direction: column; width: 12px; background: #f4f4f0; }
.scroll button { display: grid; place-items: center; height: 11px; border: 1px solid #b4c4ec; border-radius: 2px; background: #c8d6fc; }
.scroll svg { width: 9px; height: 9px; }
.thumb { height: 136px; border: 1px solid #b4c8f4; border-radius: 2px; background: #c6d4fc; margin-bottom: auto; }

.palette { width: 71px; margin-left: 5px; padding: 0 3px; border: 1px solid #fff; border-right-color: #777; border-bottom-color: #777; border-top: 0; }
h4 { display: flex; align-items: center; gap: 2px; height: 11px; font: 8px/10px "Liberation Sans", sans-serif; }
h4::before, h4::after { content: ""; height: 1px; background: #bcb8a8; }
h4::before { width: 2px; }
h4::after { flex: 1; }
.tiles { display: grid; grid-template-columns: repeat(3, 18px); gap: 5px; margin: 1px 0 4px; }
.tiles svg { width: 18px; height: 18px; }
.tiles .col1 { grid-column: 1; }
.red { color: #e02838; }
.blu { color: #1850c0; }

.tabs { display: flex; flex-direction: column; width: 14px; }
.tabs button {
  writing-mode: vertical-rl;
  width: 13px;
  height: 30px;
  border: 1px solid #77756a;
  border-top-color: #fff;
  border-radius: 0 3px 3px 0;
  font: 8px/11px "Liberation Sans", sans-serif;
}
.tabs .cur { border-color: transparent; height: 31px; padding-bottom: 8px; }
```
